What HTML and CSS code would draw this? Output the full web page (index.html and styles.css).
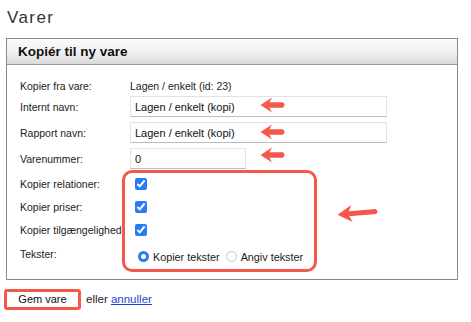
FILE: index.html
```html
<!DOCTYPE html>
<html lang="da">
<head>
    <meta charset="UTF-8">
    <title>Varer</title>
    <link rel="stylesheet" href="styles.css">
</head>
<body>
    <h1 class="page-title">Varer</h1>

    <!-- Kopiér vare -->
    <div class="panel">
        <div class="panel-head">Kopiér til ny vare</div>
        <div class="panel-body">
            <div class="form-grid">
                <div class="lbl r1">Kopier fra vare:</div>
                <div class="val r1">Lagen / enkelt (id: 23)</div>

                <div class="lbl r2">Internt navn:</div>
                <div class="val r2"><input type="text" class="txt wide" value="Lagen / enkelt (kopi)"></div>

                <div class="lbl r2">Rapport navn:</div>
                <div class="val r2"><input type="text" class="txt wide" value="Lagen / enkelt (kopi)"></div>

                <div class="lbl r2">Varenummer:</div>
                <div class="val r2"><input type="text" class="txt short" value="0"></div>

                <div class="lbl r5">Kopier relationer:</div>
                <div class="val r5"><input type="checkbox" class="chk" checked></div>

                <div class="lbl r6">Kopier priser:</div>
                <div class="val r6"><input type="checkbox" class="chk" checked></div>

                <div class="lbl r7">Kopier tilgængelighed:</div>
                <div class="val r7"><input type="checkbox" class="chk" checked></div>

                <div class="lbl r8">Tekster:</div>
                <div class="val r8 radios">
                    <label><input type="radio" name="tekster" class="rad" checked> Kopier tekster</label>
                    <label><input type="radio" name="tekster" class="rad"> Angiv tekster</label>
                </div>
            </div>

            <!-- Markeringer -->
            <div class="mark-box"></div>
            <svg class="arrow a1" viewBox="0 0 26 16"><path d="M0.5 8 L12 0.5 L9.5 5.3 L23 5.3 Q26 8 23 10.7 L9.5 10.7 L12 15.5 Z"/></svg>
            <svg class="arrow a2" viewBox="0 0 26 16"><path d="M0.5 8 L12 0.5 L9.5 5.3 L23 5.3 Q26 8 23 10.7 L9.5 10.7 L12 15.5 Z"/></svg>
            <svg class="arrow a3" viewBox="0 0 26 16"><path d="M0.5 8 L12 0.5 L9.5 5.3 L23 5.3 Q26 8 23 10.7 L9.5 10.7 L12 15.5 Z"/></svg>
            <svg class="arrow big" viewBox="0 0 42 18"><path d="M0.5 9 L15 0.5 L12 6.5 L39 6.5 Q42 9 39 11.5 L12 11.5 L15 17.5 Z"/></svg>
        </div>
    </div>

    <div class="actions">
        <button type="button" class="save-btn">Gem vare</button>
        <span>eller <a href="#">annuller</a></span>
    </div>
</body>
</html>
```

FILE: styles.css
```css
body {
    margin: 0;
    background: #fff;
    color: #222;
    font-family: 'Liberation Sans', Arial, sans-serif;
}
.page-title {
    margin: 0 0 10px 0;
    padding: 8px 0 0 7px;
    font-size: 17px;
    line-height: 20px;
    font-weight: normal;
    letter-spacing: 1.4px;
    color: #333;
}
.panel {
    margin-left: 6px;
    width: 450px;
    border: 1px solid #888;
    position: relative;
}
.panel-head {
    height: 24px;
    padding: 1px 0 0 11px;
    line-height: 24px;
    font-size: 13.5px;
    font-weight: bold;
    color: #111;
    background: linear-gradient(#fbfbfb, #f1f2f2 50%, #d9d9d9);
    border-bottom: 1px solid #999;
}
.panel-body {
    padding: 13.5px 0 9px 13px;
    font-size: 10.5px;
}
.form-grid {
    display: grid;
    grid-template-columns: 110px 1fr;
    align-items: center;
}
.lbl {
    white-space: nowrap;
}
.r1 { height: 15px; line-height: 15px; }
.r2 { height: 26px; }
.r5 { height: 24px; }
.r6 { height: 23px; }
.r7 { height: 22px; }
.r8 { height: 29px; }
.lbl.r2, .lbl.r5, .lbl.r6, .lbl.r7, .val.r2, .val.r5, .val.r6, .val.r7 {
    display: flex;
    align-items: center;
}
.lbl.r8 {
    display: flex;
    align-items: center;
    padding-bottom: 3px;
    box-sizing: border-box;
}
.txt {
    box-sizing: border-box;
    height: 21px;
    margin: 0;
    padding: 0 4px;
    border: 1px solid #e2e2e2;
    border-bottom-color: #bdbdbd;
    font-family: 'Liberation Sans', Arial, sans-serif;
    font-size: 11px;
    color: #111;
}
.wide { width: 257px; }
.short { width: 116px; }
.chk {
    width: 12px;
    height: 12px;
    margin: 0 0 0 5px;
    accent-color: #2b7bf6;
    position: relative;
}
.radios {
    display: flex;
    align-items: center;
    padding-top: 3px;
    box-sizing: border-box;
    height: 29px;
}
.radios label {
    display: flex;
    align-items: center;
    margin-right: 6px;
    font-size: 10.8px;
}
.rad {
    appearance: none;
    box-sizing: border-box;
    width: 11px;
    height: 11px;
    margin: 0 4px 0 8px;
    border: 1px solid #c4c4c4;
    border-radius: 50%;
    background: #fff;
}
.radios label + label .rad {
    margin-left: 0;
}
.rad:checked {
    border: 3.5px solid #2b7bf6;
}

/* Røde markeringer */
.mark-box {
    position: absolute;
    left: 115px;
    top: 131px;
    width: 195px;
    height: 102px;
    box-sizing: border-box;
    border: 3px solid #f5574b;
    border-radius: 10px;
}
.arrow {
    position: absolute;
    width: 26px;
    height: 16px;
    fill: #f5574b;
    left: 253px;
}
.a1 { top: 58px; }
.a2 { top: 85px; }
.a3 { top: 108px; }
.big {
    left: 330px;
    top: 165px;
    width: 42px;
    height: 18px;
    transform: rotate(-5deg);
}

.actions {
    display: flex;
    align-items: center;
    margin-top: 9px;
    padding-left: 4px;
    font-size: 11.5px;
}
.save-btn {
    box-sizing: border-box;
    width: 77px;
    height: 21px;
    margin-right: 5px;
    padding: 0;
    background: #fff;
    border: 3px solid #f5574b;
    border-radius: 3px;
    font-family: 'Liberation Sans', Arial, sans-serif;
    font-size: 11px;
    color: #111;
}
.actions a {
    color: #1f3fd6;
}
```
